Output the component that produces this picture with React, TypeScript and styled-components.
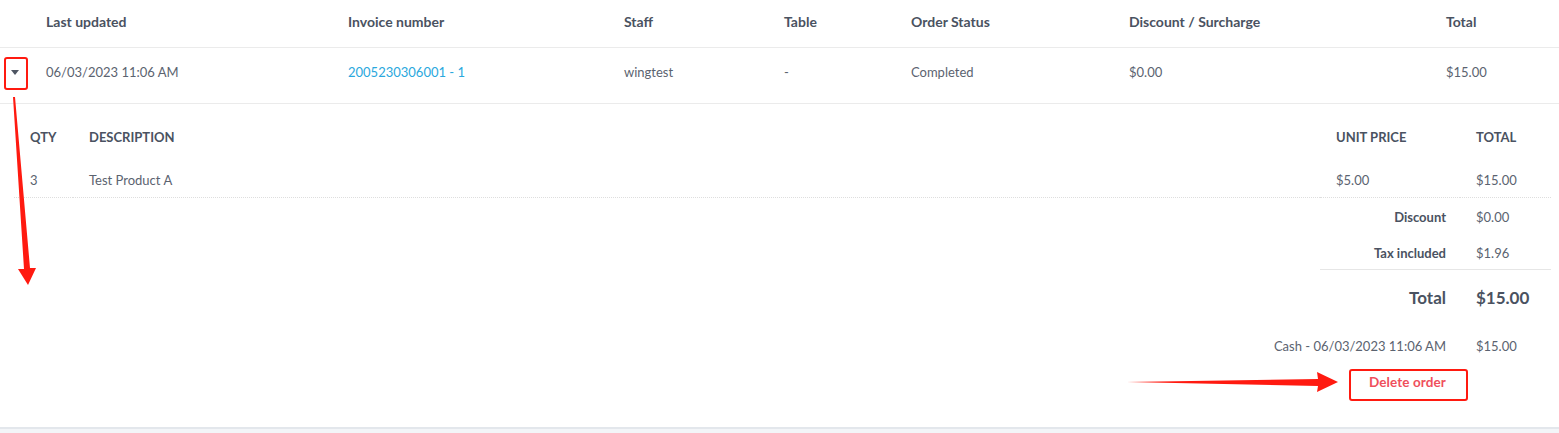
import React from "react";
import styled, { createGlobalStyle } from "styled-components";

const GlobalStyle = createGlobalStyle`
  html, body {
    margin: 0;
    padding: 0;
    background: #f3f5f8;
  }
  body {
    font-family: Lato, "Liberation Sans", sans-serif;
    font-size: 13px;
    color: #5b6370;
  }
`;

const Page = styled.div`
  position: relative;
  width: 1559px;
  height: 433px;
  overflow: hidden;
  background: #f3f5f8;
`;

const Panel = styled.div`
  background: #ffffff;
  border-bottom: 2px solid #e3e7ec;
  height: 427px;
`;

const OrderRow = styled.div<{ $head?: boolean }>`
  display: grid;
  grid-template-columns: 46px 302px 276px 160px 127px 218px 317px 1fr;
  align-items: center;
  box-sizing: border-box;
  height: ${(p) => (p.$head ? "48px" : "56px")};
  padding-bottom: ${(p) => (p.$head ? "5px" : "7px")};
  border-bottom: 1px solid #ebebeb;
  color: ${(p) => (p.$head ? "#4a5261" : "#5b6370")};
  font-weight: ${(p) => (p.$head ? 700 : 400)};
  font-size: ${(p) => (p.$head ? "14px" : "13px")};
`;

const OrderCell = styled.div`
  white-space: nowrap;
`;

const Toggle = styled.button`
  all: unset;
  display: flex;
  align-items: center;
  justify-content: center;
  width: 30px;
  height: 30px;
  cursor: pointer;
`;

const Caret = styled.span`
  width: 0;
  height: 0;
  border-left: 4px solid transparent;
  border-right: 4px solid transparent;
  border-top: 5px solid #4f5663;
  margin-top: 1px;
`;

const InvoiceLink = styled.a`
  color: #2aa8dd;
  text-decoration: none;
`;

const Detail = styled.div`
  display: grid;
  grid-template-columns: 59px 1247px 140px 91px;
  margin: 0 8px 0 14px;
  padding-top: 14px;
`;

const Cell = styled.div<{
  $h?: number;
  $top?: number;
  $bold?: boolean;
  $size?: number;
  $line?: "dotted" | "solid";
}>`
  display: flex;
  align-items: center;
  box-sizing: border-box;
  height: ${(p) => p.$h ?? 36}px;
  padding: ${(p) => p.$top ?? 0}px 0 0 16px;
  white-space: nowrap;
  font-weight: ${(p) => (p.$bold ? 700 : 400)};
  font-size: ${(p) => p.$size ?? 13}px;
  color: ${(p) => (p.$bold ? "#4a5261" : "#5b6370")};
  border-bottom: ${(p) =>
    p.$line === "dotted"
      ? "1px dotted #dedede"
      : p.$line === "solid"
      ? "1px solid #e6e6e6"
      : "none"};
`;

const SummaryLabel = styled(Cell)`
  grid-column: 1 / 4;
  justify-content: flex-end;
  padding: ${(p) => p.$top ?? 0}px 14px 0 0;
  margin-left: 1306px;
`;

const SummaryFill = styled.div`
  grid-column: 1 / 3;
  height: 36px;
`;

const DeleteButton = styled.button`
  all: unset;
  grid-column: 1 / 4;
  justify-self: end;
  display: flex;
  align-items: center;
  box-sizing: border-box;
  height: 34px;
  padding-top: 2px;
  margin-right: 14px;
  color: #ef4f5c;
  font-weight: 700;
  font-size: 13.5px;
  letter-spacing: 0.1px;
  cursor: pointer;
`;

const Mark = styled.div<{ $x: number; $y: number; $w: number; $h: number }>`
  position: absolute;
  left: ${(p) => p.$x}px;
  top: ${(p) => p.$y}px;
  width: ${(p) => p.$w}px;
  height: ${(p) => p.$h}px;
  border: 2px solid #ff1a10;
  border-radius: 3px;
  box-sizing: border-box;
  pointer-events: none;
`;

const Arrows = styled.svg`
  position: absolute;
  left: 0;
  top: 0;
  pointer-events: none;
`;

const headers = [
  "",
  "Last updated",
  "Invoice number",
  "Staff",
  "Table",
  "Order Status",
  "Discount / Surcharge",
  "Total",
];

export default function App() {
  return (
    <Page>
      <GlobalStyle />
      <Panel>
        <OrderRow $head>
          {headers.map((h, i) => (
            <OrderCell key={i}>{h}</OrderCell>
          ))}
        </OrderRow>
        <OrderRow>
          <OrderCell>
            <Toggle aria-label="toggle">
              <Caret />
            </Toggle>
          </OrderCell>
          <OrderCell>06/03/2023 11:06 AM</OrderCell>
          <OrderCell>
            <InvoiceLink href="#">2005230306001 - 1</InvoiceLink>
          </OrderCell>
          <OrderCell>wingtest</OrderCell>
          <OrderCell>-</OrderCell>
          <OrderCell>Completed</OrderCell>
          <OrderCell>$0.00</OrderCell>
          <OrderCell>$15.00</OrderCell>
        </OrderRow>

        <Detail>
          <Cell $h={38} $bold>QTY</Cell>
          <Cell $h={38} $bold>DESCRIPTION</Cell>
          <Cell $h={38} $bold>UNIT PRICE</Cell>
          <Cell $h={38} $bold>TOTAL</Cell>

          <Cell $h={42} $top={6} $line="dotted">3</Cell>
          <Cell $h={42} $top={6} $line="dotted">Test Product A</Cell>
          <Cell $h={42} $top={6} $line="dotted">$5.00</Cell>
          <Cell $h={42} $top={6} $line="dotted">$15.00</Cell>

          <SummaryLabel $bold $top={2}>Discount</SummaryLabel>
          <Cell $top={2}>$0.00</Cell>

          <SummaryLabel $bold $top={2} $line="solid">Tax included</SummaryLabel>
          <Cell $top={2} $line="solid">$1.96</Cell>

          <SummaryLabel $h={54} $bold $size={17}>Total</SummaryLabel>
          <Cell $h={54} $bold $size={17}>$15.00</Cell>

          <SummaryLabel $h={40} $top={3}>Cash - 06/03/2023 11:06 AM</SummaryLabel>
          <Cell $h={40} $top={3}>$15.00</Cell>

          <DeleteButton>Delete order</DeleteButton>
          <SummaryFill />
        </Detail>
      </Panel>

      <Mark $x={4} $y={57} $w={24} $h={33} />
      <Mark $x={1349} $y={369} $w={119} $h={32} />
      <Arrows width="1559" height="433" viewBox="0 0 1559 433">
        <polygon
          fill="#ff1a10"
          points="13,97 15,97 30,268 36,268 28,285 18,269 24,269"
        />
        <polygon
          fill="#ff1a10"
          points="1127,382 1318,379 1317,372 1338,382 1317,392 1318,386"
        />
      </Arrows>
    </Page>
  );
}
